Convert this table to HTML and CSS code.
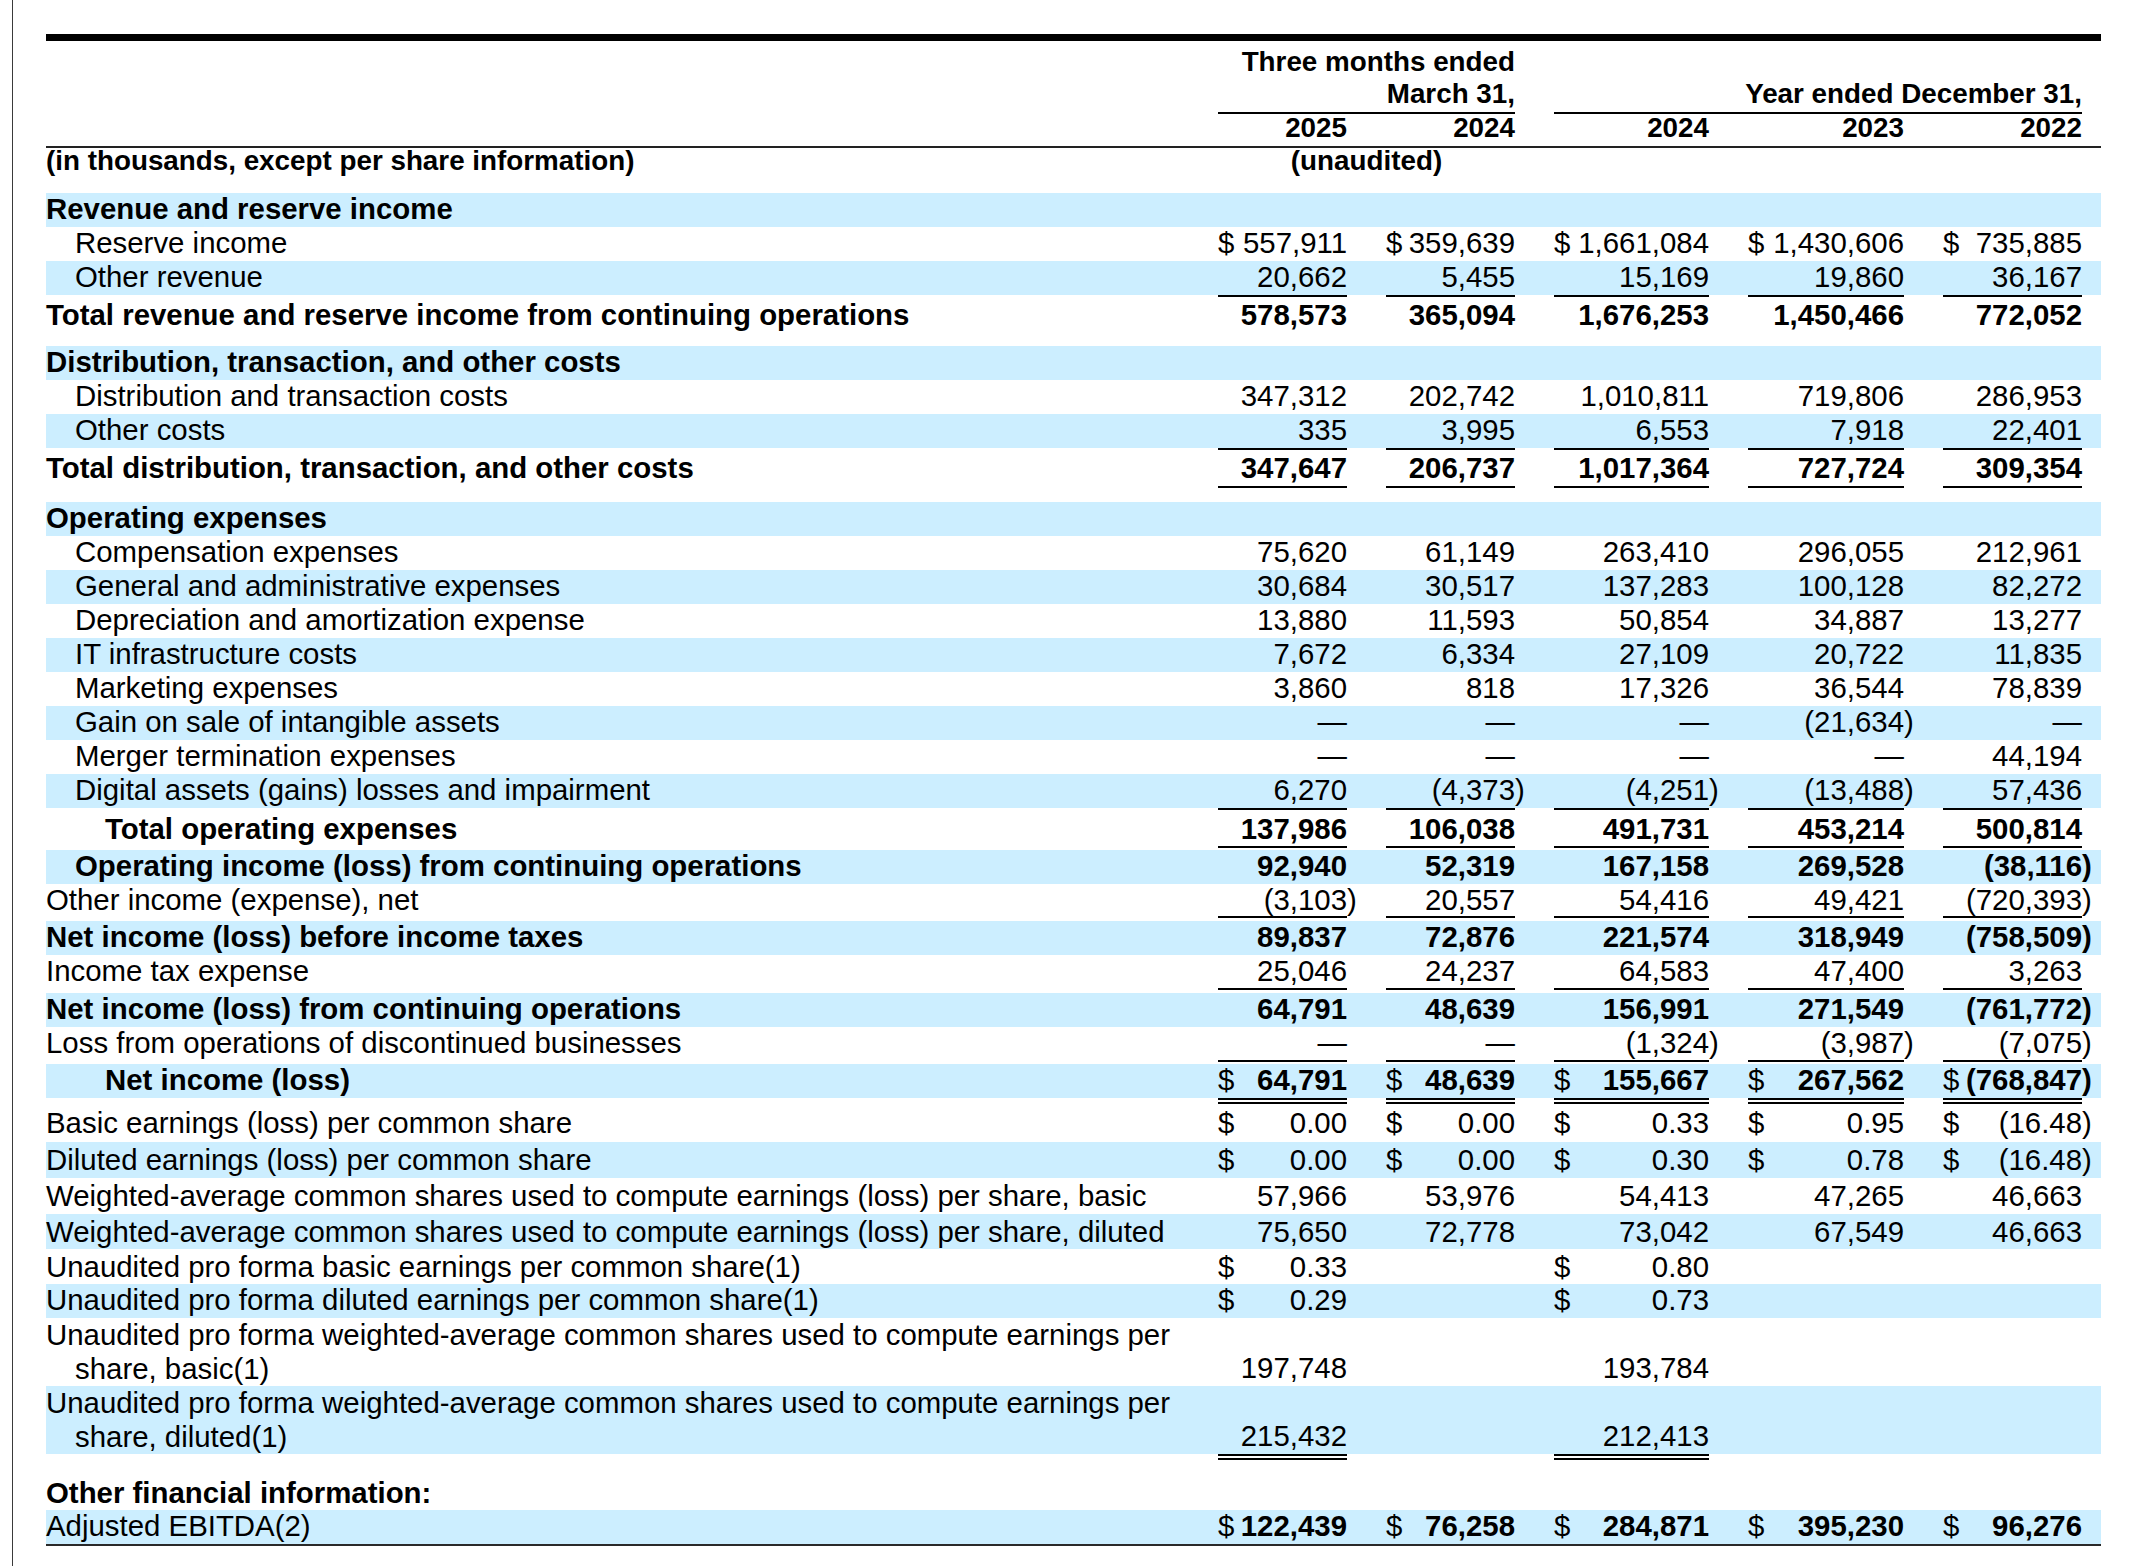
FILE: index.html
```html
<!DOCTYPE html>
<html lang="en">
<head>
<meta charset="utf-8">
<title>Selected consolidated financial data</title>
<link rel="stylesheet" href="styles.css">
</head>
<body>
<div class="page">
<table class="fin">
<colgroup>
<col class="cl"><col class="g1"><col class="w129"><col class="g39"><col class="w129"><col class="g39"><col class="w155"><col class="g39"><col class="w156"><col class="g39"><col class="w139"><col class="g19">
</colgroup>
<tbody>
<tr class="h1 b hd"><td class="l"></td><td></td><td colspan="3">Three months ended</td><td></td><td></td><td></td><td></td><td></td><td></td><td></td></tr>
<tr class="h2 b hd"><td class="l"></td><td></td><td class="v" colspan="3">March 31,</td><td></td><td class="v" colspan="5">Year ended December 31,</td><td></td></tr>
<tr class="h3 b hd"><td class="l"></td><td></td><td>2025</td><td></td><td>2024</td><td></td><td>2024</td><td></td><td>2023</td><td></td><td>2022</td><td></td></tr>
<tr class="h4 b hd"><td class="l">(in thousands, except per share information)</td><td></td><td class="c" colspan="3">(unaudited)</td><td></td><td></td><td></td><td></td><td></td><td></td><td></td></tr>

<tr class="band b"><td class="l">Revenue and reserve income</td><td></td><td></td><td></td><td></td><td></td><td></td><td></td><td></td><td></td><td></td><td></td></tr>
<tr><td class="l i1">Reserve income</td><td></td><td class="v"><span class="d">$</span>557,911</td><td></td><td class="v"><span class="d">$</span>359,639</td><td></td><td class="v"><span class="d">$</span>1,661,084</td><td></td><td class="v"><span class="d">$</span>1,430,606</td><td></td><td class="v"><span class="d">$</span>735,885</td><td></td></tr>
<tr class="band"><td class="l i1">Other revenue</td><td></td><td class="v">20,662</td><td></td><td class="v">5,455</td><td></td><td class="v">15,169</td><td></td><td class="v">19,860</td><td></td><td class="v">36,167</td><td></td></tr>
<tr class="tot1 b"><td class="l">Total revenue and reserve income from continuing operations</td><td></td><td class="v">578,573</td><td></td><td class="v">365,094</td><td></td><td class="v">1,676,253</td><td></td><td class="v">1,450,466</td><td></td><td class="v">772,052</td><td></td></tr>

<tr class="band b"><td class="l">Distribution, transaction, and other costs</td><td></td><td></td><td></td><td></td><td></td><td></td><td></td><td></td><td></td><td></td><td></td></tr>
<tr><td class="l i1">Distribution and transaction costs</td><td></td><td class="v">347,312</td><td></td><td class="v">202,742</td><td></td><td class="v">1,010,811</td><td></td><td class="v">719,806</td><td></td><td class="v">286,953</td><td></td></tr>
<tr class="band"><td class="l i1">Other costs</td><td></td><td class="v">335</td><td></td><td class="v">3,995</td><td></td><td class="v">6,553</td><td></td><td class="v">7,918</td><td></td><td class="v">22,401</td><td></td></tr>
<tr class="tot2 b"><td class="l">Total distribution, transaction, and other costs</td><td></td><td class="v">347,647</td><td></td><td class="v">206,737</td><td></td><td class="v">1,017,364</td><td></td><td class="v">727,724</td><td></td><td class="v">309,354</td><td></td></tr>
<tr class="sp sp14"><td colspan="12"></td></tr>

<tr class="band b"><td class="l">Operating expenses</td><td></td><td></td><td></td><td></td><td></td><td></td><td></td><td></td><td></td><td></td><td></td></tr>
<tr><td class="l i1">Compensation expenses</td><td></td><td class="v">75,620</td><td></td><td class="v">61,149</td><td></td><td class="v">263,410</td><td></td><td class="v">296,055</td><td></td><td class="v">212,961</td><td></td></tr>
<tr class="band"><td class="l i1">General and administrative expenses</td><td></td><td class="v">30,684</td><td></td><td class="v">30,517</td><td></td><td class="v">137,283</td><td></td><td class="v">100,128</td><td></td><td class="v">82,272</td><td></td></tr>
<tr><td class="l i1">Depreciation and amortization expense</td><td></td><td class="v">13,880</td><td></td><td class="v">11,593</td><td></td><td class="v">50,854</td><td></td><td class="v">34,887</td><td></td><td class="v">13,277</td><td></td></tr>
<tr class="band"><td class="l i1">IT infrastructure costs</td><td></td><td class="v">7,672</td><td></td><td class="v">6,334</td><td></td><td class="v">27,109</td><td></td><td class="v">20,722</td><td></td><td class="v">11,835</td><td></td></tr>
<tr><td class="l i1">Marketing expenses</td><td></td><td class="v">3,860</td><td></td><td class="v">818</td><td></td><td class="v">17,326</td><td></td><td class="v">36,544</td><td></td><td class="v">78,839</td><td></td></tr>
<tr class="band"><td class="l i1">Gain on sale of intangible assets</td><td></td><td class="v">—</td><td></td><td class="v">—</td><td></td><td class="v">—</td><td></td><td class="v">(21,634<span class="rp">)</span></td><td></td><td class="v">—</td><td></td></tr>
<tr><td class="l i1">Merger termination expenses</td><td></td><td class="v">—</td><td></td><td class="v">—</td><td></td><td class="v">—</td><td></td><td class="v">—</td><td></td><td class="v">44,194</td><td></td></tr>
<tr class="band"><td class="l i1">Digital assets (gains) losses and impairment</td><td></td><td class="v">6,270</td><td></td><td class="v">(4,373<span class="rp">)</span></td><td></td><td class="v">(4,251<span class="rp">)</span></td><td></td><td class="v">(13,488<span class="rp">)</span></td><td></td><td class="v">57,436</td><td></td></tr>
<tr class="tot3 b"><td class="l i2">Total operating expenses</td><td></td><td class="v">137,986</td><td></td><td class="v">106,038</td><td></td><td class="v">491,731</td><td></td><td class="v">453,214</td><td></td><td class="v">500,814</td><td></td></tr>
<tr class="sp sp2"><td colspan="12"></td></tr>
<tr class="band b"><td class="l i1">Operating income (loss) from continuing operations</td><td></td><td class="v">92,940</td><td></td><td class="v">52,319</td><td></td><td class="v">167,158</td><td></td><td class="v">269,528</td><td></td><td class="v">(38,116<span class="rp">)</span></td><td></td></tr>
<tr class="ul1"><td class="l">Other income (expense), net</td><td></td><td class="v">(3,103<span class="rp">)</span></td><td></td><td class="v">20,557</td><td></td><td class="v">54,416</td><td></td><td class="v">49,421</td><td></td><td class="v">(720,393<span class="rp">)</span></td><td></td></tr>
<tr class="sp sp3"><td colspan="12"></td></tr>
<tr class="band b"><td class="l">Net income (loss) before income taxes</td><td></td><td class="v">89,837</td><td></td><td class="v">72,876</td><td></td><td class="v">221,574</td><td></td><td class="v">318,949</td><td></td><td class="v">(758,509<span class="rp">)</span></td><td></td></tr>
<tr class="ul2"><td class="l">Income tax expense</td><td></td><td class="v">25,046</td><td></td><td class="v">24,237</td><td></td><td class="v">64,583</td><td></td><td class="v">47,400</td><td></td><td class="v">3,263</td><td></td></tr>
<tr class="sp sp3"><td colspan="12"></td></tr>
<tr class="band b"><td class="l">Net income (loss) from continuing operations</td><td></td><td class="v">64,791</td><td></td><td class="v">48,639</td><td></td><td class="v">156,991</td><td></td><td class="v">271,549</td><td></td><td class="v">(761,772<span class="rp">)</span></td><td></td></tr>
<tr class="ul2"><td class="l">Loss from operations of discontinued businesses</td><td></td><td class="v">—</td><td></td><td class="v">—</td><td></td><td class="v">(1,324<span class="rp">)</span></td><td></td><td class="v">(3,987<span class="rp">)</span></td><td></td><td class="v">(7,075<span class="rp">)</span></td><td></td></tr>
<tr class="sp sp2"><td colspan="12"></td></tr>
<tr class="band b"><td class="l i2">Net income (loss)</td><td></td><td class="v"><span class="d">$</span>64,791</td><td></td><td class="v"><span class="d">$</span>48,639</td><td></td><td class="v"><span class="d">$</span>155,667</td><td></td><td class="v"><span class="d">$</span>267,562</td><td></td><td class="v"><span class="d">$</span>(768,847<span class="rp">)</span></td><td></td></tr>

<tr class="dbl"><td class="l">Basic earnings (loss) per common share</td><td></td><td class="v"><span class="d">$</span>0.00</td><td></td><td class="v"><span class="d">$</span>0.00</td><td></td><td class="v"><span class="d">$</span>0.33</td><td></td><td class="v"><span class="d">$</span>0.95</td><td></td><td class="v"><span class="d">$</span>(16.48<span class="rp">)</span></td><td></td></tr>
<tr class="band r36"><td class="l">Diluted earnings (loss) per common share</td><td></td><td class="v"><span class="d">$</span>0.00</td><td></td><td class="v"><span class="d">$</span>0.00</td><td></td><td class="v"><span class="d">$</span>0.30</td><td></td><td class="v"><span class="d">$</span>0.78</td><td></td><td class="v"><span class="d">$</span>(16.48<span class="rp">)</span></td><td></td></tr>
<tr class="r36"><td class="l">Weighted-average common shares used to compute earnings (loss) per share, basic</td><td></td><td class="v">57,966</td><td></td><td class="v">53,976</td><td></td><td class="v">54,413</td><td></td><td class="v">47,265</td><td></td><td class="v">46,663</td><td></td></tr>
<tr class="band r35"><td class="l">Weighted-average common shares used to compute earnings (loss) per share, diluted</td><td></td><td class="v">75,650</td><td></td><td class="v">72,778</td><td></td><td class="v">73,042</td><td></td><td class="v">67,549</td><td></td><td class="v">46,663</td><td></td></tr>
<tr class="r35"><td class="l">Unaudited pro forma basic earnings per common share(1)</td><td></td><td class="v"><span class="d">$</span>0.33</td><td></td><td></td><td></td><td class="v"><span class="d">$</span>0.80</td><td></td><td></td><td></td><td></td><td></td></tr>
<tr class="band"><td class="l">Unaudited pro forma diluted earnings per common share(1)</td><td></td><td class="v"><span class="d">$</span>0.29</td><td></td><td></td><td></td><td class="v"><span class="d">$</span>0.73</td><td></td><td></td><td></td><td></td><td></td></tr>
<tr class="two"><td class="l hang">Unaudited pro forma weighted-average common shares used to compute earnings per share, basic(1)</td><td></td><td class="v">197,748</td><td></td><td></td><td></td><td class="v">193,784</td><td></td><td></td><td></td><td></td><td></td></tr>
<tr class="two band"><td class="l hang">Unaudited pro forma weighted-average common shares used to compute earnings per share, diluted(1)</td><td></td><td class="v">215,432</td><td></td><td></td><td></td><td class="v">212,413</td><td></td><td></td><td></td><td></td><td></td></tr>
<tr class="sp spdbl"><td></td><td></td><td class="v"></td><td></td><td></td><td></td><td class="v"></td><td></td><td></td><td></td><td></td><td></td></tr>

<tr class="ofi b"><td class="l">Other financial information:</td><td></td><td></td><td></td><td></td><td></td><td></td><td></td><td></td><td></td><td></td><td></td></tr>
<tr class="band b last"><td class="l nb">Adjusted EBITDA(2)</td><td></td><td class="v"><span class="d">$</span>122,439</td><td></td><td class="v"><span class="d">$</span>76,258</td><td></td><td class="v"><span class="d">$</span>284,871</td><td></td><td class="v"><span class="d">$</span>395,230</td><td></td><td class="v"><span class="d">$</span>96,276</td><td></td></tr>
</tbody>
</table>
</div>
</body>
</html>
```

FILE: styles.css
```css
html, body {
  margin: 0;
  padding: 0;
  background: #ffffff;
}

body {
  font-family: "Liberation Sans", Arial, Helvetica, sans-serif;
  font-size: 29.4px;
  color: #000000;
}

.page {
  margin-left: 12px;
  border-left: 1px solid #3a3a3a;
  min-height: 1566px;
  box-sizing: border-box;
  padding: 34px 0 0 33px;
}

table.fin {
  width: 2055px;
  table-layout: fixed;
  border-collapse: separate;
  border-spacing: 0;
  border-top: 7px solid #000000;
}

col.cl { width: 1151px; }
col.g1 { width: 21px; }
col.w129 { width: 129px; }
col.g39 { width: 39px; }
col.w155 { width: 155px; }
col.w156 { width: 156px; }
col.w139 { width: 139px; }
col.g19 { width: 19px; }

td {
  padding: 0 0 3px 0;
  line-height: 31px;
  white-space: nowrap;
  text-align: right;
  vertical-align: baseline;
}

td.l {
  text-align: left;
  white-space: normal;
}

td.c {
  text-align: center;
}

td.i1 { padding-left: 29px; }
td.i2 { padding-left: 59px; }

td.hang {
  padding-left: 29px;
  text-indent: -29px;
}

.b td { font-weight: bold; }
.b td.nb { font-weight: normal; }

.d {
  float: left;
  font-weight: normal;
}

.rp {
  display: inline-block;
  width: 0;
  text-align: left;
}

tr.band td { background: #cceeff; }

/* header rows */
tr.hd td { font-size: 27.8px; }
tr.h1 td { padding-top: 5px; padding-bottom: 1px; }
tr.h2 td { padding-bottom: 3px; }
tr.h2 td.v { border-bottom: 2px solid #000000; }
tr.h3 td {
  line-height: 27px;
  padding-bottom: 5px;
  border-bottom: 2px solid #222222;
}
tr.h4 td {
  line-height: 25px;
  padding-bottom: 20px;
}

/* totals and rules */
tr.tot1 td { padding-top: 2px; padding-bottom: 16px; }
tr.tot1 td.v { border-top: 2px solid #000000; }

tr.tot2 td { padding-top: 2px; padding-bottom: 3px; }
tr.tot2 td.v { border-top: 2px solid #000000; border-bottom: 2px solid #000000; }

tr.tot3 td { padding-top: 3px; padding-bottom: 2px; }
tr.tot3 td.v { border-top: 2px solid #000000; border-bottom: 2px solid #000000; }

tr.ul1 td { padding-bottom: 1px; }
tr.ul1 td.v { border-bottom: 2px solid #000000; }

tr.ul2 td { padding-bottom: 2px; }
tr.ul2 td.v { border-bottom: 2px solid #000000; }

tr.dbl td { padding-top: 3px; padding-bottom: 4px; }
tr.dbl td.v { border-top: 6px double #000000; }

tr.r36 td { padding-top: 2px; padding-bottom: 3px; }
tr.r35 td { padding-top: 2px; padding-bottom: 2px; }

tr.two td.l {
  line-height: 34px;
  padding-bottom: 0;
}
tr.two td.v {
  vertical-align: bottom;
  padding-bottom: 3px;
}

/* spacer rows */
tr.sp td {
  padding: 0;
  font-size: 0;
  line-height: 0;
  box-sizing: border-box;
}
tr.sp14 td { height: 14px; }
tr.sp2 td { height: 2px; }
tr.sp3 td { height: 3px; }
tr.spdbl td { height: 23px; }
tr.spdbl td.v { border-top: 6px double #000000; }

tr.ofi td { padding-bottom: 2px; }

tr.last td { border-bottom: 2px solid #2a2a2a; }
```
